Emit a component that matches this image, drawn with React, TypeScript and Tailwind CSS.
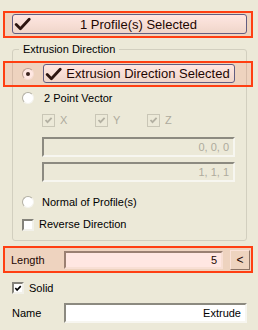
import React from "react";

const BigCheck: React.FC<{ className?: string }> = ({ className }) => (
  <svg viewBox="0 0 17 14" className={className}>
    <path d="M2.2 7.6 L6.4 11.8 L15.2 2.2" fill="none" stroke="#111" strokeWidth="2.8" strokeLinecap="round" strokeLinejoin="round" />
  </svg>
);

const SmallCheck: React.FC<{ color?: string }> = ({ color = "#000" }) => (
  <svg viewBox="0 0 9 9" className="w-[9px] h-[9px]">
    <path d="M1.5 4 L3.5 6.2 L7.6 1.8" fill="none" stroke={color} strokeWidth="1.8" />
  </svg>
);

const SelButton: React.FC<{ label: string; className?: string }> = ({ label, className }) => (
  <div className={`flex items-center rounded-[3px] border border-[#4d6290] bg-gradient-to-b from-[#ffffff] to-[#eeece4] text-[13px] ${className}`}>
    <BigCheck className="ml-[1px] w-[17px] h-[14px] shrink-0" />
    <span className="flex-1 text-center leading-none">{label}</span>
  </div>
);

const Radio: React.FC<{ on?: boolean }> = ({ on }) => (
  <div className="w-[12px] h-[12px] shrink-0 rounded-full border border-[#b2afa3] border-b-[#f4f3ee] border-r-[#f4f3ee] bg-white flex items-center justify-center">
    {on && <div className="w-[4px] h-[4px] rounded-full bg-[#222]" />}
  </div>
);

const Box: React.FC<{ on?: boolean; disabled?: boolean }> = ({ on, disabled }) =>
  disabled ? (
    <div className="w-[13px] h-[13px] shrink-0 border border-[#c9c6b6] bg-[#ECE9D8] flex items-center justify-center">
      {on && <SmallCheck color="#b3b0a2" />}
    </div>
  ) : (
    <div className="w-[12px] h-[12px] shrink-0 border-2 border-t-[#84827a] border-l-[#84827a] border-b-[#f2f1ea] border-r-[#f2f1ea] bg-white flex items-center justify-center">
      {on && <SmallCheck />}
    </div>
  );

const Sunken: React.FC<{ value: string; className?: string; disabled?: boolean }> = ({ value, className, disabled }) => (
  <div
    className={`flex items-center justify-end pr-[4px] border-2 border-t-[#8c8a80] border-l-[#8c8a80] border-b-[#f7f6f0] border-r-[#f7f6f0] ${
      disabled ? "bg-[#ECE9D8] text-[#aeab9d]" : "bg-white text-black"
    } ${className}`}
  >
    {value}
  </div>
);

const Highlight: React.FC<{ className: string }> = ({ className }) => (
  <div className={`absolute pointer-events-none border-2 border-[#ff3f12] bg-[rgba(255,60,20,0.12)] ${className}`} />
);

export default function App() {
  return (
    <div className="relative w-[258px] h-[330px] overflow-hidden bg-[#ECE9D8] font-['Liberation_Sans',Arial,sans-serif] text-[11px] text-black">
      <div className="pt-[14px] pl-[12px]">
        <SelButton label="1 Profile(s) Selected" className="w-[235px] h-[20px]" />
      </div>

      <fieldset className="ml-[12px] mt-[9px] w-[235px] h-[198px] border border-[#d2cfbf] rounded-[3px]">
        <legend className="ml-[6px] px-[4px] h-[13px] leading-[13px]">Extrusion Direction</legend>
        <div className="flex flex-col pl-[9px]">
          <div className="mt-[8px] h-[19px] flex items-center">
            <Radio on />
            <SelButton label="Extrusion Direction Selected" className="ml-[9px] w-[192px] h-[19px]" />
          </div>
          <div className="mt-[8px] h-[14px] flex items-center">
            <Radio />
            <span className="ml-[10px]">2 Point Vector</span>
          </div>
          <div className="mt-[9px] h-[13px] ml-[20px] flex items-center text-[#aeab9d]">
            <div className="w-[53px] flex items-center gap-[5px]"><Box on disabled /><span>X</span></div>
            <div className="w-[52px] flex items-center gap-[5px]"><Box on disabled /><span>Y</span></div>
            <div className="flex items-center gap-[5px]"><Box on disabled /><span>Z</span></div>
          </div>
          <Sunken disabled value="0, 0, 0" className="mt-[10px] ml-[20px] w-[193px] h-[20px]" />
          <Sunken disabled value="1, 1, 1" className="mt-[5px] ml-[20px] w-[193px] h-[20px]" />
          <div className="mt-[13px] h-[14px] flex items-center">
            <Radio />
            <span className="ml-[8px]">Normal of Profile(s)</span>
          </div>
          <div className="mt-[9px] h-[13px] flex items-center">
            <Box />
            <span className="ml-[5px]">Reverse Direction</span>
          </div>
        </div>
      </fieldset>

      <div className="mt-[9px] h-[20px] flex items-center">
        <span className="pl-[11px] w-[64px]">Length</span>
        <Sunken value="5" className="w-[159px] h-[18px]" />
        <div className="ml-[7px] w-[20px] h-[20px] flex items-center justify-center border border-t-[#fbfaf5] border-l-[#fbfaf5] border-b-[#7d7b71] border-r-[#7d7b71] bg-[#ECE9D8] text-[12px]">
          &lt;
        </div>
      </div>

      <div className="mt-[12px] h-[12px] pl-[12px] flex items-center">
        <Box on />
        <span className="ml-[5px]">Solid</span>
      </div>

      <div className="mt-[9px] h-[20px] flex items-center">
        <span className="pl-[12px] w-[64px]">Name</span>
        <Sunken value="Extrude" className="w-[183px] h-[20px]" />
      </div>

      <Highlight className="left-[3px] top-[11px] w-[250px] h-[27px]" />
      <Highlight className="left-[3px] top-[61px] w-[250px] h-[26px]" />
      <Highlight className="left-[3px] top-[246px] w-[250px] h-[27px]" />
    </div>
  );
}
